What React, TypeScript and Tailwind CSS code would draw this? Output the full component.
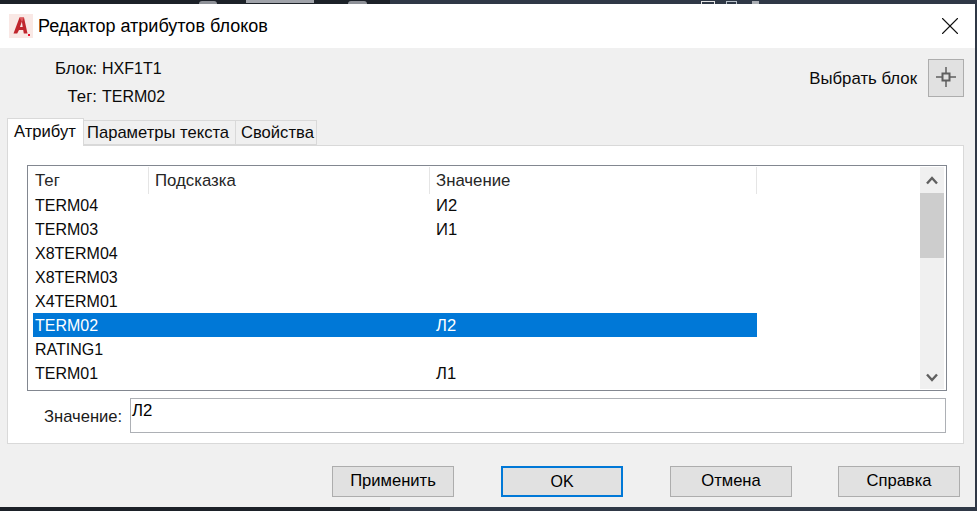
import { X } from 'lucide-react'

const rows = [
  { tag: 'TERM04', value: 'И2' },
  { tag: 'TERM03', value: 'И1' },
  { tag: 'X8TERM04', value: '' },
  { tag: 'X8TERM03', value: '' },
  { tag: 'X4TERM01', value: '' },
  { tag: 'TERM02', value: 'Л2', selected: true },
  { tag: 'RATING1', value: '' },
  { tag: 'TERM01', value: 'Л1' },
]

function AppLogo() {
  return (
    <svg width={24} height={24} viewBox="0 0 24 24">
      <rect width={24} height={24} fill="#f9e8e5" />
      <path d="M4.5 19.5 L10.5 3.5 H15 L18.5 19.5 H14.8 L14.2 16 H10 L8.2 19.5 Z M11 13 H13.7 L12.9 7.5 Z" fill="#c0262d" fillRule="evenodd" />
      <path d="M10.5 3.5 H15 L13 8 Z" fill="#dc5a5e" />
      <rect x={19} y={20} width={2} height={2} fill="#e8112d" />
    </svg>
  )
}

function Crosshair() {
  return (
    <svg width={20} height={20} viewBox="0 0 20 20" fill="none" stroke="#5f5f5f">
      <path d="M0 10 H6 M14 10 H20 M10 0 V6 M10 14 V20" strokeWidth={1.5} />
      <rect x={6.5} y={6.5} width={7} height={7} strokeWidth={2} />
    </svg>
  )
}

function Chevron({ up }: { up?: boolean }) {
  return (
    <svg width={12} height={9} viewBox="0 0 12 9" fill="none" stroke="#606060" strokeWidth={2.4}>
      <path d={up ? 'M1 7.5 L6 2 L11 7.5' : 'M1 1.5 L6 7 L11 1.5'} />
    </svg>
  )
}

function DialogButton({ label, focused }: { label: string; focused?: boolean }) {
  return (
    <button
      type="button"
      className={
        focused
          ? 'w-[122px] h-[31px] bg-[#e1e1e1] border-2 border-[#0078d7] text-[16px] text-black'
          : 'w-[122px] h-[31px] bg-[#e1e1e1] border border-[#adadad] text-[16.6px] text-black'
      }
    >
      {label}
    </button>
  )
}

function Tab({ label, active, width, pad }: { label: string; active?: boolean; width: string; pad: string }) {
  return (
    <div
      className={
        active
          ? `${width} ${pad} h-[28px] -mb-px z-10 pt-[2px] bg-white border border-b-0 border-[#d9d9d9] leading-[22px]`
          : `${width} ${pad} h-[25px] bg-[#f0f0f0] border border-l-0 border-[#d9d9d9] leading-[24px]`
      }
    >
      {label}
    </div>
  )
}

export default function App() {
  return (
    <div className="w-[977px] h-[511px] overflow-hidden bg-[#2f3846] font-['Liberation_Sans',Arial,sans-serif] text-[16px] text-[#0a0a0a]">
      {/* Desktop behind the dialog */}
      <div className="h-[4px] flex">
        <div className="w-[390px] bg-[#1c2128] flex">
          <div className="ml-[199px] mt-[1px] w-[18px] h-[3px] rounded-t-full bg-[#8d9097]" />
          <div className="ml-[29px] w-[68px] h-[3px] bg-[#a0a3aa]" />
          <div className="ml-[34px] mt-[1px] w-[19px] h-[3px] rounded-t-full bg-[#8d9097]" />
        </div>
        <div className="ml-[311px] mt-[1px] w-[14px] h-[3px] border-x border-t border-[#e5e5e5]" />
        <div className="ml-[11px] mt-[1px] w-[11px] h-[3px] border-x border-t border-[#b7c0c9]" />
        <div className="ml-[15px] mt-[1px] w-[7px] h-[3px] bg-[#a9adb3]" />
      </div>
      <div className="w-[975px] h-[503px] bg-[#f0f0f0] flex flex-col">
        {/* Title bar */}
        <div className="h-[44px] shrink-0 bg-white flex items-center pl-[9px] pr-[10px]">
          <AppLogo />
          <span className="ml-[5px] text-[18px] text-black">Редактор атрибутов блоков</span>
          <X className="ml-auto" size={30} strokeWidth={0.85} color="#111" />
        </div>

        {/* Block info */}
        <div className="h-[70px] shrink-0 flex pl-[55px] pr-[11px]">
          <div className="grid grid-cols-[42px_auto] grid-rows-[28px_28px] gap-x-[5px] pt-[7px] items-center">
            <span className="text-right text-[16.8px]">Блок:</span>
            <span>HXF1T1</span>
            <span className="text-right text-[16.8px]">Тег:</span>
            <span>TERM02</span>
          </div>
          <div className="ml-auto flex items-start pt-[11px] gap-[11px]">
            <span className="mt-[7px] text-[16.8px]">Выбрать блок</span>
            <div className="w-[36px] h-[38px] pb-[2px] bg-[#e1e1e1] border border-[#adadad] flex items-center justify-center">
              <Crosshair />
            </div>
          </div>
        </div>

        {/* Tabs */}
        <div className="flex items-end pl-[7px] h-[27px] shrink-0 text-[16.6px]">
          <Tab label="Атрибут" active width="w-[77px]" pad="pl-[6px]" />
          <Tab label="Параметры текста" width="w-[152px]" pad="pl-[3px]" />
          <Tab label="Свойства" width="w-[81px]" pad="pl-[5px]" />
        </div>

        {/* Tab panel */}
        <div className="ml-[7px] w-[957px] h-[299px] shrink-0 bg-white border border-[#d9d9d9] pt-[19px] pl-[19px] pr-[16px]">
          <div className="h-[226px] border border-[#828790] flex p-[1px]">
            <div className="flex-1 min-w-0">
              <div className="grid grid-cols-[116px_281px_327px] h-[26px] pl-[4px] text-[#262626] text-[16.8px]">
                <div className="border-r border-[#e5e5e5] pl-[2px] leading-[27px]">Тег</div>
                <div className="border-r border-[#e5e5e5] pl-[6px] leading-[27px]">Подсказка</div>
                <div className="border-r border-[#e5e5e5] pl-[6px] leading-[27px]">Значение</div>
              </div>
              {rows.map((row) => (
                <div
                  key={row.tag}
                  className={
                    row.selected
                      ? 'ml-[4px] w-[724px] h-[24px] grid grid-cols-[396px_1fr] leading-[25px] bg-[#0078d7] text-white'
                      : 'ml-[4px] w-[724px] h-[24px] grid grid-cols-[396px_1fr] leading-[25px]'
                  }
                >
                  <div className="pl-[2px]">{row.tag}</div>
                  <div className="pl-[7px] text-[16.6px]">{row.value}</div>
                </div>
              ))}
            </div>
            {/* Scrollbar */}
            <div className="w-[24px] mr-[1px] bg-[#f0f0f0] flex flex-col">
              <div className="h-[26px] flex items-center justify-center">
                <Chevron up />
              </div>
              <div className="h-[65px] bg-[#cdcdcd]" />
              <div className="mt-auto h-[24px] flex items-center justify-center">
                <Chevron />
              </div>
            </div>
          </div>

          {/* Value field */}
          <div className="flex mt-[7px]">
            <span className="ml-[17px] w-[86px] mt-[7px] text-[#1a1a1a] text-[16.6px]">Значение:</span>
            <div className="w-[816px] h-[35px] border border-[#adb0b5] pl-[1px] leading-[23px] text-[16.8px] text-black">Л2</div>
          </div>
        </div>

        {/* Footer */}
        <div className="flex pt-[22px]">
          <div className="ml-[332px]"><DialogButton label="Применить" /></div>
          <div className="ml-[47px]"><DialogButton label="OK" focused /></div>
          <div className="ml-[47px]"><DialogButton label="Отмена" /></div>
          <div className="ml-[46px]"><DialogButton label="Справка" /></div>
        </div>
      </div>
      <div className="h-[4px] w-[390px] bg-[#1c2128]" />
    </div>
  )
}
